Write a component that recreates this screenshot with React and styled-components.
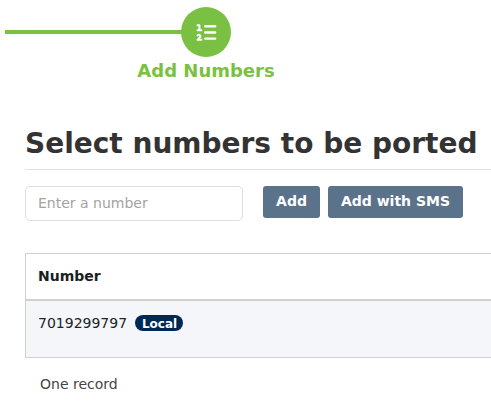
import React from 'react';
import styled, { createGlobalStyle } from 'styled-components';

const GlobalStyle = createGlobalStyle`
  * { box-sizing: border-box; }
  body {
    margin: 0;
    background: #fff;
    font-family: "DejaVu Sans", sans-serif;
    font-size: 14px;
    color: #212529;
    overflow: hidden;
  }
`;

const Page = styled.main`
  height: 418px;
  padding-top: 7px;
  overflow: hidden;
`;

const Stepper = styled.div`
  display: flex;
  align-items: center;
  height: 50px;
  padding-left: 5px;
`;

const Connector = styled.div`
  width: 178px;
  height: 4px;
  margin-right: -2px;
  background: #7ac143;
`;

const StepCircle = styled.div`
  display: flex;
  align-items: center;
  justify-content: center;
  width: 50px;
  height: 50px;
  border-radius: 50%;
  background: #7ac143;
`;

const StepLabel = styled.div`
  width: 412px;
  margin-top: 3px;
  text-align: center;
  font-size: 18px;
  line-height: 22px;
  font-weight: 700;
  color: #7ac143;
`;

const Content = styled.section`
  margin: 43px 0 0 25px;
`;

const Heading = styled.h1`
  height: 45px;
  margin: 0 0 16px;
  border-bottom: 1px solid #e2e2e2;
  font-size: 28px;
  line-height: 38px;
  font-weight: 700;
  color: #333;
  white-space: nowrap;
`;

const Form = styled.form`
  display: flex;
  align-items: flex-start;
`;

const NumberInput = styled.input`
  width: 218px;
  height: 35px;
  margin: 0 20px 0 0;
  padding: 0 12px 2px;
  border: 1px solid #dededf;
  border-radius: 5px;
  background: #fff;
  font: inherit;
  color: #333;
  outline: 0;
  &::placeholder { color: #a3a3a3; opacity: 1; }
`;

const Button = styled.button`
  width: ${({ $width }) => $width}px;
  height: 32px;
  margin: 0 8px 0 0;
  padding: 0 0 2px;
  border: 0;
  border-radius: 3px;
  background: #5a738a;
  color: #fff;
  font: 700 14px "DejaVu Sans", sans-serif;
  white-space: nowrap;
`;

const Table = styled.div`
  margin-top: 32px;
  border: 1px solid #cfd0d3;
  border-right: 0;
`;

const HeaderRow = styled.div`
  height: 47px;
  padding: 12px;
  border-bottom: 2px solid #cfd0d3;
  font-weight: 700;
  line-height: 20px;
  color: #1b1e21;
`;

const Row = styled.div`
  display: flex;
  align-items: flex-start;
  gap: 8px;
  height: 56px;
  padding: 12px;
  background: #f4f6fa;
  line-height: 20px;
`;

const Badge = styled.span`
  width: 48px;
  height: 16px;
  margin-top: 2px;
  padding-left: 1px;
  border-radius: 8px;
  background: #002855;
  color: #fff;
  font-size: 12px;
  line-height: 18px;
  font-weight: 700;
  text-align: center;
`;

const Summary = styled.div`
  margin: 16px 0 0 15px;
  line-height: 20px;
  color: #444;
`;

const ListIcon = styled.svg`
  width: 22px;
  height: 20px;
  fill: none;
  stroke: #fff;
`;

function NumberedList() {
  return (
    <ListIcon viewBox="0 0 22 20" aria-hidden="true">
      <path d="M10.2 4.3h10M10.2 10.5h10M10.2 16.6h10" strokeWidth="2.4" strokeLinecap="round" />
      <path d="M2.5 3.2h1.9v4.9M2.6 8.2h3.8" strokeWidth="2" strokeLinecap="round" strokeLinejoin="round" />
      <path d="M2.5 13.4c1.2-1 3-.7 3 .5 0 .8-.6 1.3-1.2 1.9l-1.8 2h3.9" strokeWidth="1.9" strokeLinecap="round" strokeLinejoin="round" />
    </ListIcon>
  );
}

export default function App() {
  return (
    <>
      <GlobalStyle />
      <Page>
        <Stepper>
          <Connector />
          <StepCircle><NumberedList /></StepCircle>
        </Stepper>
        <StepLabel>Add Numbers</StepLabel>
        <Content>
          <Heading>Select numbers to be ported</Heading>
          <Form>
            <NumberInput placeholder="Enter a number" />
            <Button type="button" $width={57}>Add</Button>
            <Button type="button" $width={135}>Add with SMS</Button>
          </Form>
          <Table>
            <HeaderRow>Number</HeaderRow>
            <Row>
              <span>7019299797</span>
              <Badge>Local</Badge>
            </Row>
          </Table>
          <Summary>One record</Summary>
        </Content>
      </Page>
    </>
  );
}
